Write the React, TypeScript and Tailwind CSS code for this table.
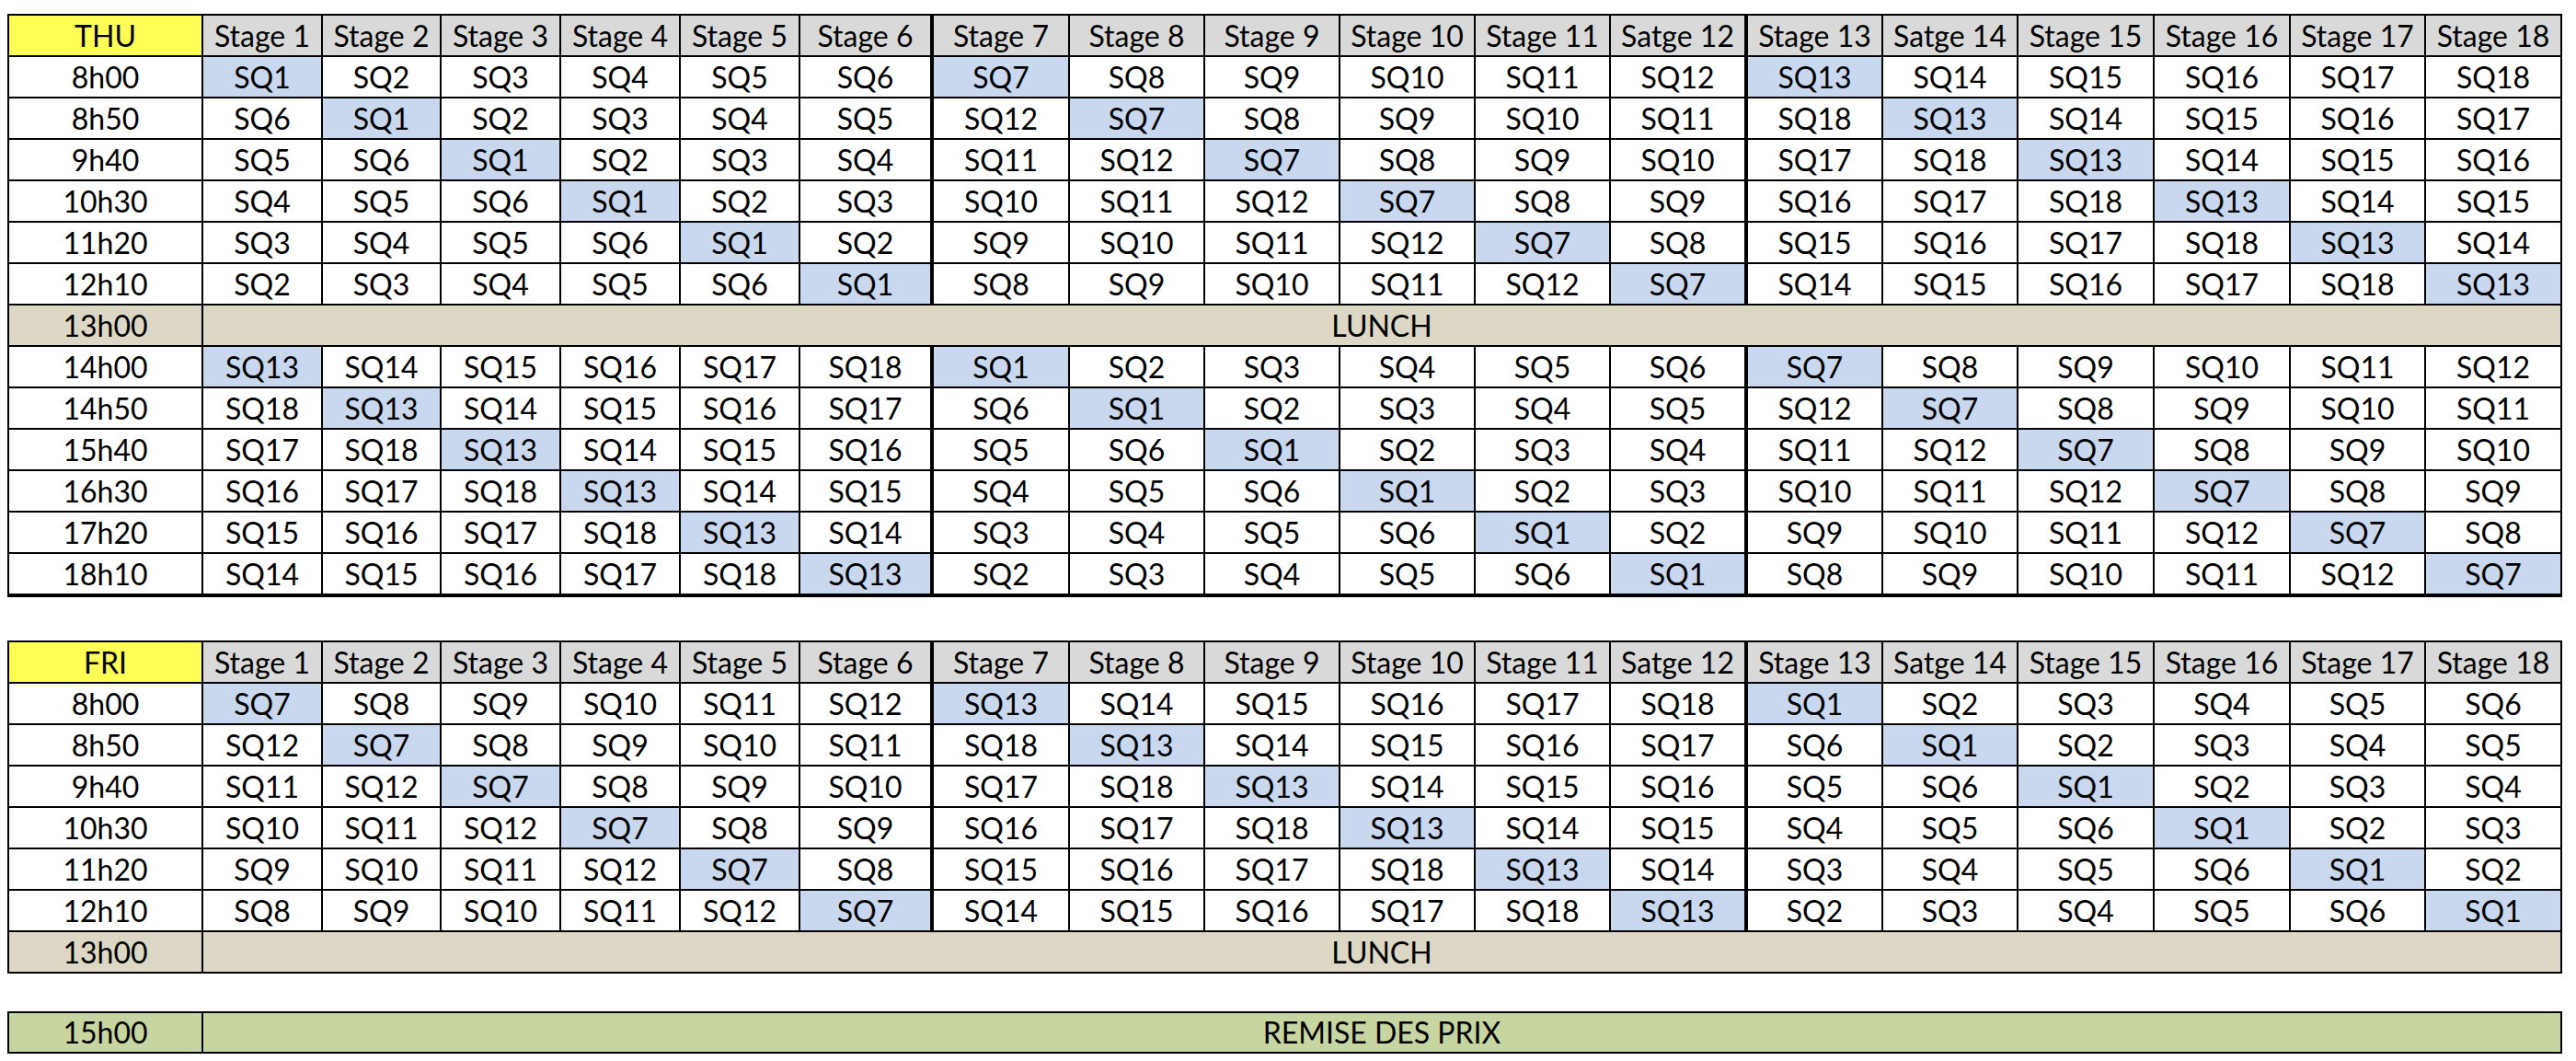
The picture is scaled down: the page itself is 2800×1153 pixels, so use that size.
import React from "react";

const STAGES_A = ["Stage 1","Stage 2","Stage 3","Stage 4","Stage 5","Stage 6","Stage 7","Stage 8","Stage 9","Stage 10","Stage 11","Satge 12","Stage 13","Satge 14","Stage 15","Stage 16","Stage 17","Stage 18"];

const COL_CLASSES = [
  "w-[130px] border-r-2",
  "w-[129px] border-r-2",
  "w-[130px] border-r-2",
  "w-[130px] border-r-2",
  "w-[130px] border-r-2",
  "w-[145px] border-r-4",
  "w-[148px] border-r-2",
  "w-[147px] border-r-2",
  "w-[147px] border-r-2",
  "w-[147px] border-r-2",
  "w-[147px] border-r-2",
  "w-[149px] border-r-4",
  "w-[147px] border-r-2",
  "w-[147px] border-r-2",
  "w-[148px] border-r-2",
  "w-[148px] border-r-2",
  "w-[147px] border-r-2",
  "flex-1",
];

const TIME_CELL = "w-[211px] shrink-0 border-r-2 border-black flex items-center justify-center";

function Row({ children, last }: { children: React.ReactNode; last?: boolean }) {
  return (
    <div className={last ? "flex h-[43px]" : "flex h-[45px] border-b-2 border-black"}>{children}</div>
  );
}

function Header({ day }: { day: string }) {
  return (
    <Row>
      <div className={TIME_CELL + " bg-[#ffff55]"}>{day}</div>
      {STAGES_A.map((s, i) => (
        <div key={i} className={COL_CLASSES[i] + " shrink-0 border-black bg-[#d9d9d9] flex items-center justify-center whitespace-nowrap"}>
          {s}
        </div>
      ))}
    </Row>
  );
}

function SessionRows({ times, bases }: { times: string[]; bases: number[] }) {
  return (
    <>
      {times.map((t, r) => (
        <Row key={t}>
          <div className={TIME_CELL + " bg-white"}>{t}</div>
          {Array.from({ length: 18 }).map((_, i) => {
            const g = Math.floor(i / 6);
            const c = i % 6;
            const v = bases[g] + ((c - r + 6) % 6);
            const hl = c === r;
            return (
              <div
                key={i}
                className={
                  COL_CLASSES[i] +
                  " shrink-0 border-black flex items-center justify-center " +
                  (hl ? "bg-[#c9d8ee]" : "bg-white")
                }
              >
                {"SQ" + v}
              </div>
            );
          })}
        </Row>
      ))}
    </>
  );
}

function SpanRow({ time, label, bg, last }: { time: string; label: string; bg: "tan" | "green"; last?: boolean }) {
  const bgc = bg === "tan" ? "bg-[#dcd8c5]" : "bg-[#c7d6a1]";
  return (
    <Row last={last}>
      <div className={TIME_CELL + " " + bgc}>{time}</div>
      <div className={"flex-1 flex items-center justify-center " + bgc}>{label}</div>
    </Row>
  );
}

const MORNING = ["8h00", "8h50", "9h40", "10h30", "11h20", "12h10"];
const AFTERNOON = ["14h00", "14h50", "15h40", "16h30", "17h20", "18h10"];

export default function App() {
  return (
    <div className="w-[2800px] h-[1153px] bg-white pt-[15px] pl-[8px] font-[Lato,sans-serif] text-[32px] leading-none text-black">
      <div className="w-[2777px] border-2 border-black flex flex-col">
        <Header day="THU" />
        <SessionRows times={MORNING} bases={[1, 7, 13]} />
        <SpanRow time="13h00" label="LUNCH" bg="tan" />
        <SessionRows times={AFTERNOON} bases={[13, 1, 7]} />
      </div>
      <div className="w-[2777px] mt-[47px] border-2 border-black flex flex-col">
        <Header day="FRI" />
        <SessionRows times={MORNING} bases={[7, 13, 1]} />
        <SpanRow time="13h00" label="LUNCH" bg="tan" last />
      </div>
      <div className="w-[2777px] mt-[41px] border-2 border-black flex flex-col">
        <div className="flex h-[42px]">
          <div className={TIME_CELL + " bg-[#c7d6a1]"}>15h00</div>
          <div className="flex-1 flex items-center justify-center bg-[#c7d6a1]">REMISE DES PRIX</div>
        </div>
      </div>
    </div>
  );
}
